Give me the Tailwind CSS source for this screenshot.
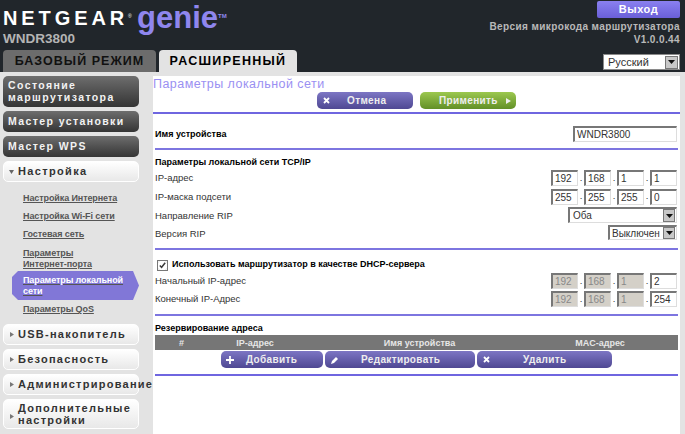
<!DOCTYPE html>
<html lang="en">
<head>
  <meta charset="UTF-8">
  <title>NETGEAR genie</title>
  <script src="https://cdn.jsdelivr.net/npm/@tailwindcss/browser@4"></script>
</head>
<body class="w-[685px] h-[434px] overflow-hidden bg-[#e3e3e3] font-['Liberation_Sans',sans-serif] text-[9.5px] text-[#333]">
  <!-- Header -->
  <header class="h-[72px] bg-[#21262b] flex justify-between">
    <div class="flex flex-col">
      <div class="flex h-[33px] pl-[3px] pt-[3px]">
        <span class="font-bold text-[20px] leading-[30px] tracking-[3.9px] text-white">NETGEAR</span>
        <span class="text-[5px] leading-[26px] text-white w-[7px]">®</span>
        <span class="font-bold text-[31px] leading-[30px] text-[#8f86ee] ml-[2px]">genie</span>
        <span class="text-[6px] leading-[26px] text-[#8f86ee] font-bold">TM</span>
      </div>
      <div class="h-[17px] pl-[3px] font-bold text-[13.5px] leading-[12px] text-[#b4b4b4]">WNDR3800</div>
      <div class="flex gap-[3px] pl-[3px]">
        <div class="w-[153px] h-[22px] rounded-t-[4px] bg-[#6c6c6c] text-center font-bold text-[12.5px] leading-[23px] tracking-[1.05px] text-[#111]">БАЗОВЫЙ РЕЖИМ</div>
        <div class="w-[138px] h-[22px] rounded-t-[4px] bg-[#e3e3e3] text-center font-bold text-[12.5px] leading-[23px] tracking-[1.3px] text-black">РАСШИРЕННЫЙ</div>
      </div>
    </div>
    <div class="w-[300px] pr-[5px] flex flex-col items-end pt-[1px]">
      <div class="w-[83px] h-[17px] rounded-[2px] bg-gradient-to-b from-[#8a80f0] to-[#6a5fd8] text-center font-bold text-[11px] leading-[17px] tracking-[0.6px] text-white">Выход</div>
      <div class="mt-[2px] text-right font-bold text-[10px] leading-[13px] tracking-[0.39px] text-[#b9b9b9]">Версия микрокода маршрутизатора<br>V1.0.0.44</div>
      <div class="mt-[8px] w-[77px] h-[16px] flex items-center justify-between bg-white border border-[#8a8a8a] pl-[4px] pr-[1px] text-[11px] text-[#333]">
        <span>Русский</span>
        <span class="w-[13px] h-[13px] flex items-center justify-center bg-[#c8c8c8] border border-[#777]">
          <svg width="7" height="4" viewBox="0 0 7 4"><path d="M0 0h7L3.5 4z" fill="#111"/></svg>
        </span>
      </div>
    </div>
  </header>

  <div class="flex pt-[4px]">
    <!-- Sidebar -->
    <nav class="w-[153px] pl-[3px] shrink-0">
      <div class="w-[136px] h-[31px] rounded-[5px] bg-gradient-to-b from-[#6e6e6e] to-[#353535] pl-[5px] pt-[3px] font-bold text-[10.5px] leading-[12px] tracking-[1.4px] text-[#f2f2f2]">Состояние<br>маршрутизатора</div>
      <div class="mt-[4px] w-[136px] h-[21px] rounded-[5px] bg-gradient-to-b from-[#6e6e6e] to-[#353535] pl-[5px] font-bold text-[10.5px] leading-[21px] tracking-[1.4px] text-[#f2f2f2]">Мастер установки</div>
      <div class="mt-[4px] w-[136px] h-[21px] rounded-[5px] bg-gradient-to-b from-[#6e6e6e] to-[#353535] pl-[5px] font-bold text-[10.5px] leading-[21px] tracking-[1.4px] text-[#f2f2f2]">Мастер WPS</div>

      <div class="mt-[4px] w-[136px] h-[21px] rounded-[5px] bg-gradient-to-b from-white to-[#e8e8e8] flex items-center border border-white">
        <svg class="ml-[5px] mr-[4px]" width="5" height="4" viewBox="0 0 5 4"><path d="M0 0h5L2.5 4z" fill="#666"/></svg>
        <span class="font-bold text-[11px] tracking-[1.35px] text-[#333]">Настройка</span>
      </div>
      <div class="pt-[11px] text-[9px] leading-[11px] font-bold tracking-[-0.1px] text-[#555] underline">
        <div class="pl-[20px] h-[18px]">Настройка Интернета</div>
        <div class="pl-[20px] h-[18px]">Настройка Wi-Fi сети</div>
        <div class="pl-[20px] h-[19px]">Гостевая сеть</div>
        <div class="pl-[20px] h-[23px]">Параметры<br>Интернет-порта</div>
        <div class="ml-[9px] w-[127px] h-[29px] pl-[11px] pt-[4px] bg-[#8177d7] text-white [clip-path:polygon(6px_0,121px_0,127px_50%,121px_100%,6px_100%,0_calc(100%-6px),0_6px)]">Параметры локальной<br>сети</div>
        <div class="pl-[20px] h-[24px] pt-[4px]">Параметры QoS</div>
      </div>

      <div class="w-[136px] h-[21px] rounded-[5px] bg-gradient-to-b from-white to-[#e8e8e8] flex items-center border border-white">
        <svg class="ml-[6px] mr-[4px]" width="4" height="5" viewBox="0 0 4 5"><path d="M0 0l4 2.5L0 5z" fill="#777"/></svg>
        <span class="font-bold text-[11px] tracking-[1.25px] text-[#333]">USB-накопитель</span>
      </div>
      <div class="mt-[4px] w-[136px] h-[21px] rounded-[5px] bg-gradient-to-b from-white to-[#e8e8e8] flex items-center border border-white">
        <svg class="ml-[6px] mr-[4px]" width="4" height="5" viewBox="0 0 4 5"><path d="M0 0l4 2.5L0 5z" fill="#777"/></svg>
        <span class="font-bold text-[11px] tracking-[1.25px] text-[#333]">Безопасность</span>
      </div>
      <div class="mt-[4px] w-[136px] h-[21px] rounded-[5px] bg-gradient-to-b from-white to-[#e8e8e8] flex items-center border border-white whitespace-nowrap">
        <svg class="ml-[6px] mr-[4px] shrink-0" width="4" height="5" viewBox="0 0 4 5"><path d="M0 0l4 2.5L0 5z" fill="#777"/></svg>
        <span class="font-bold text-[11px] tracking-[1.25px] text-[#333]">Администрирование</span>
      </div>
      <div class="mt-[4px] w-[136px] h-[30px] rounded-[5px] bg-gradient-to-b from-white to-[#e8e8e8] flex items-center border border-white">
        <svg class="ml-[6px] mr-[4px] mt-[4px]" width="4" height="5" viewBox="0 0 4 5"><path d="M0 0l4 2.5L0 5z" fill="#777"/></svg>
        <span class="font-bold text-[11px] leading-[12px] tracking-[1.25px] text-[#333]">Дополнительные<br>настройки</span>
      </div>
    </nav>

    <!-- Content -->
    <main class="w-[527px] h-[358px] bg-white">
      <h1 class="h-[16px] text-[12.5px] leading-[17px] tracking-[0.45px] text-[#9a90f2]">Параметры локальной сети</h1>
      <div class="h-[18px] pl-[164px] flex gap-[7px] text-[10px] font-bold tracking-[0.35px] text-[#eee]">
        <div class="w-[96px] h-[17px] rounded-[5px] bg-gradient-to-b from-[#7d76c4] to-[#4f4893] flex items-center pl-[6px]">
          <svg width="7" height="7" viewBox="0 0 7 7"><path d="M1 1l5 5M6 1L1 6" stroke="#fff" stroke-width="1.8"/></svg>
          <span class="ml-[17px]">Отмена</span>
        </div>
        <div class="w-[96px] h-[17px] rounded-[5px] bg-gradient-to-b from-[#9cc84f] to-[#629027] flex items-center pl-[19px]">
          <span>Применить</span>
          <svg class="ml-[8px]" width="5" height="6" viewBox="0 0 5 6"><path d="M0 0l5 3-5 3z" fill="#eee"/></svg>
        </div>
      </div>
      <div class="mt-[2px] h-[2px] bg-[#6f66e0]"></div>

      <div class="pl-[2px] w-[525px]">
        <div class="mt-[12px] h-[16px] flex items-center justify-between">
          <b class="pt-[2px] text-[9px] text-black">Имя устройства</b>
          <input class="w-[104px] h-[16px] mr-px px-[2px] text-[10px] border border-[#ddd] border-t-2 border-l-2 border-t-[#777] border-l-[#777]" value="WNDR3800">
        </div>
        <div class="mt-[6px] h-[2px] bg-[#7d75e0]"></div>

        <div class="mt-[7px] h-[12px] font-bold text-[9px] leading-[11px] text-black">Параметры локальной сети TCP/IP</div>
        <div class="h-[18px] flex items-center justify-between">
          <span>IP-адрес</span>
          <div class="flex items-center mr-px">
            <input class="w-[27px] h-[16px] px-[2px] text-[10px] border border-[#ddd] border-t-2 border-l-2 border-t-[#777] border-l-[#777]" value="192"><span class="w-[6px] text-center">.</span>
            <input class="w-[27px] h-[16px] px-[2px] text-[10px] border border-[#ddd] border-t-2 border-l-2 border-t-[#777] border-l-[#777]" value="168"><span class="w-[6px] text-center">.</span>
            <input class="w-[27px] h-[16px] px-[2px] text-[10px] border border-[#ddd] border-t-2 border-l-2 border-t-[#777] border-l-[#777]" value="1"><span class="w-[6px] text-center">.</span>
            <input class="w-[27px] h-[16px] px-[2px] text-[10px] border border-[#ddd] border-t-2 border-l-2 border-t-[#777] border-l-[#777]" value="1">
          </div>
        </div>
        <div class="h-[19px] flex items-center justify-between">
          <span class="pt-[2px]">IP-маска подсети</span>
          <div class="flex items-center mr-px">
            <input class="w-[27px] h-[16px] px-[2px] text-[10px] border border-[#ddd] border-t-2 border-l-2 border-t-[#777] border-l-[#777]" value="255"><span class="w-[6px] text-center">.</span>
            <input class="w-[27px] h-[16px] px-[2px] text-[10px] border border-[#ddd] border-t-2 border-l-2 border-t-[#777] border-l-[#777]" value="255"><span class="w-[6px] text-center">.</span>
            <input class="w-[27px] h-[16px] px-[2px] text-[10px] border border-[#ddd] border-t-2 border-l-2 border-t-[#777] border-l-[#777]" value="255"><span class="w-[6px] text-center">.</span>
            <input class="w-[27px] h-[16px] px-[2px] text-[10px] border border-[#ddd] border-t-2 border-l-2 border-t-[#777] border-l-[#777]" value="0">
          </div>
        </div>
        <div class="h-[18px] flex items-center justify-between">
          <span class="pt-[2px]">Направление RIP</span>
          <div class="w-[109px] h-[16px] mr-px flex items-center justify-between border border-[#ddd] border-t-2 border-l-2 border-t-[#777] border-l-[#777] pl-[3px] pr-px text-[10px]">
            <span>Оба</span>
            <span class="w-[12px] h-[13px] flex items-center justify-center bg-[#c8c8c8] border border-[#777]">
              <svg width="7" height="4" viewBox="0 0 7 4"><path d="M0 0h7L3.5 4z" fill="#111"/></svg>
            </span>
          </div>
        </div>
        <div class="h-[17px] flex items-center justify-between">
          <span class="pt-[3px]">Версия RIP</span>
          <div class="w-[69px] h-[15px] mr-px flex items-center justify-between border border-[#ddd] border-t-2 border-l-2 border-t-[#777] border-l-[#777] pl-[2px] pr-px text-[10px]">
            <span>Выключен</span>
            <span class="w-[12px] h-[12px] flex items-center justify-center bg-[#c8c8c8] border border-[#777]">
              <svg width="7" height="4" viewBox="0 0 7 4"><path d="M0 0h7L3.5 4z" fill="#111"/></svg>
            </span>
          </div>
        </div>
        <div class="mt-[7px] h-[2px] bg-[#7d75e0]"></div>

        <div class="mt-[9px] h-[12px] flex items-center pl-[3px]">
          <input type="checkbox" checked class="w-[9px] h-[9px] accent-white outline outline-[#777] m-0">
          <b class="ml-[5px] text-[9px] text-black">Использовать маршрутизатор в качестве DHCP-сервера</b>
        </div>
        <div class="mt-[1px] h-[18px] flex items-center justify-between">
          <span>Начальный IP-адрес</span>
          <div class="flex items-center mr-px">
            <input disabled class="w-[27px] h-[16px] px-[2px] text-[10px] text-[#888] bg-[#d4d0c8] border border-[#ddd] border-t-2 border-l-2 border-t-[#777] border-l-[#777]" value="192"><span class="w-[6px] text-center">.</span>
            <input disabled class="w-[27px] h-[16px] px-[2px] text-[10px] text-[#888] bg-[#d4d0c8] border border-[#ddd] border-t-2 border-l-2 border-t-[#777] border-l-[#777]" value="168"><span class="w-[6px] text-center">.</span>
            <input disabled class="w-[27px] h-[16px] px-[2px] text-[10px] text-[#888] bg-[#d4d0c8] border border-[#ddd] border-t-2 border-l-2 border-t-[#777] border-l-[#777]" value="1"><span class="w-[6px] text-center">.</span>
            <input class="w-[27px] h-[16px] px-[2px] text-[10px] border border-[#ddd] border-t-2 border-l-2 border-t-[#777] border-l-[#777]" value="2">
          </div>
        </div>
        <div class="h-[18px] flex items-center justify-between">
          <span>Конечный IP-Адрес</span>
          <div class="flex items-center mr-px">
            <input disabled class="w-[27px] h-[16px] px-[2px] text-[10px] text-[#888] bg-[#d4d0c8] border border-[#ddd] border-t-2 border-l-2 border-t-[#777] border-l-[#777]" value="192"><span class="w-[6px] text-center">.</span>
            <input disabled class="w-[27px] h-[16px] px-[2px] text-[10px] text-[#888] bg-[#d4d0c8] border border-[#ddd] border-t-2 border-l-2 border-t-[#777] border-l-[#777]" value="168"><span class="w-[6px] text-center">.</span>
            <input disabled class="w-[27px] h-[16px] px-[2px] text-[10px] text-[#888] bg-[#d4d0c8] border border-[#ddd] border-t-2 border-l-2 border-t-[#777] border-l-[#777]" value="1"><span class="w-[6px] text-center">.</span>
            <input class="w-[27px] h-[16px] px-[2px] text-[10px] border border-[#ddd] border-t-2 border-l-2 border-t-[#777] border-l-[#777]" value="254">
          </div>
        </div>
        <div class="mt-[6px] h-[2px] bg-[#7d75e0]"></div>

        <div class="mt-[7px] h-[12px] font-bold text-[9px] leading-[11px] text-black">Резервирование адреса</div>
        <div class="h-[15px] bg-[#767676] grid grid-cols-[53px_94px_235px_126px] text-center font-bold text-[9px] leading-[16px] text-[#e6e6e6]">
          <span>#</span><span>IP-адрес</span><span>Имя устройства</span><span>MAC-адрес</span>
        </div>
        <div class="mt-[1px] pl-[66px] flex gap-[2px] text-[10px] font-bold tracking-[0.35px] text-[#eee]">
          <div class="w-[102px] h-[17px] rounded-[5px] bg-gradient-to-b from-[#7d76c4] to-[#4f4893] flex items-center pl-[5px]">
            <svg width="8" height="8" viewBox="0 0 8 8"><path d="M4 0v8M0 4h8" stroke="#fff" stroke-width="1.8"/></svg>
            <span class="ml-[12px]">Добавить</span>
          </div>
          <div class="w-[150px] h-[17px] rounded-[5px] bg-gradient-to-b from-[#7d76c4] to-[#4f4893] flex items-center pl-[6px]">
            <svg width="8" height="8" viewBox="0 0 8 8"><path d="M0 8l1-3 4-4 2 2-4 4z" fill="#fff"/></svg>
            <span class="ml-[22px]">Редактировать</span>
          </div>
          <div class="w-[135px] h-[17px] rounded-[5px] bg-gradient-to-b from-[#7d76c4] to-[#4f4893] flex items-center pl-[6px]">
            <svg width="7" height="7" viewBox="0 0 7 7"><path d="M1 1l5 5M6 1L1 6" stroke="#fff" stroke-width="1.8"/></svg>
            <span class="ml-[33px]">Удалить</span>
          </div>
        </div>
        <div class="mt-[6px] h-[2px] bg-[#6f66e0]"></div>
      </div>
    </main>
  </div>
</body>
</html>
